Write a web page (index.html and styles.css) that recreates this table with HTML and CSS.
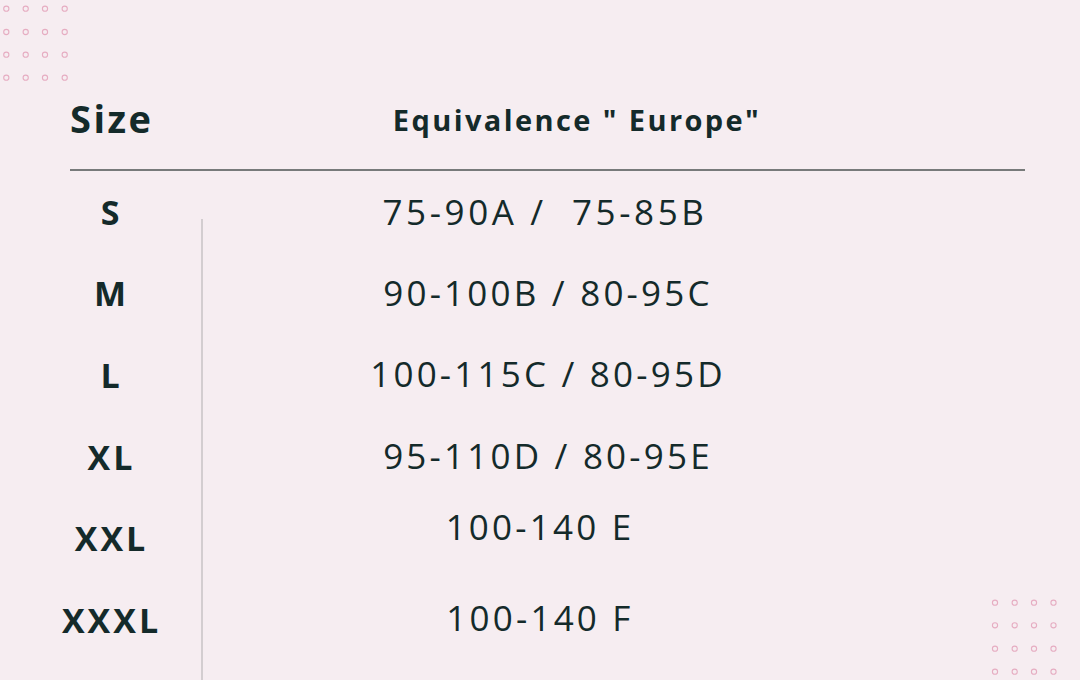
FILE: index.html
```html
<!DOCTYPE html>
<html lang="en">
<head>
<meta charset="utf-8">
<title>Size guide</title>
<link rel="stylesheet" href="styles.css">
</head>
<body>
<svg class="dots dots-tl" width="80" height="90" viewBox="0 0 80 90" aria-hidden="true">
  <g fill="none" stroke="#e6adc2" stroke-width="1.1">
    <circle cx="6.3" cy="8.7" r="2.6"/><circle cx="25.7" cy="8.7" r="2.6"/><circle cx="45" cy="8.7" r="2.6"/><circle cx="64.7" cy="8.7" r="2.6"/>
    <circle cx="6.3" cy="32" r="2.6"/><circle cx="25.7" cy="32" r="2.6"/><circle cx="45" cy="32" r="2.6"/><circle cx="64.7" cy="32" r="2.6"/>
    <circle cx="6.3" cy="54.7" r="2.6"/><circle cx="25.7" cy="54.7" r="2.6"/><circle cx="45" cy="54.7" r="2.6"/><circle cx="64.7" cy="54.7" r="2.6"/>
    <circle cx="6.3" cy="77.7" r="2.6"/><circle cx="25.7" cy="77.7" r="2.6"/><circle cx="45" cy="77.7" r="2.6"/><circle cx="64.7" cy="77.7" r="2.6"/>
  </g>
</svg>
<svg class="dots dots-br" width="80" height="90" viewBox="0 0 80 90" aria-hidden="true">
  <g fill="none" stroke="#e6adc2" stroke-width="1.1">
    <circle cx="15" cy="12.7" r="2.6"/><circle cx="34.7" cy="12.7" r="2.6"/><circle cx="54" cy="12.7" r="2.6"/><circle cx="73.5" cy="12.7" r="2.6"/>
    <circle cx="15" cy="35.3" r="2.6"/><circle cx="34.7" cy="35.3" r="2.6"/><circle cx="54" cy="35.3" r="2.6"/><circle cx="73.5" cy="35.3" r="2.6"/>
    <circle cx="15" cy="58.7" r="2.6"/><circle cx="34.7" cy="58.7" r="2.6"/><circle cx="54" cy="58.7" r="2.6"/><circle cx="73.5" cy="58.7" r="2.6"/>
    <circle cx="15" cy="81.7" r="2.6"/><circle cx="34.7" cy="81.7" r="2.6"/><circle cx="54" cy="81.7" r="2.6"/><circle cx="73.5" cy="81.7" r="2.6"/>
  </g>
</svg>

<main class="chart">
  <div class="head">
    <div class="head-size">Size</div>
    <div class="head-eq">Equivalence " Europe"</div>
  </div>
  <div class="body">
    <div class="sizes">
      <div class="size">S</div>
      <div class="size">M</div>
      <div class="size">L</div>
      <div class="size">XL</div>
      <div class="size">XXL</div>
      <div class="size">XXXL</div>
    </div>
    <div class="divider"></div>
    <div class="values">
      <div class="value value-first">75-90A /&nbsp; 75-85B</div>
      <div class="value">90-100B / 80-95C</div>
      <div class="value">100-115C / 80-95D</div>
      <div class="value">95-110D / 80-95E</div>
      <div class="value value-up">100-140 E</div>
      <div class="value value-down">100-140 F</div>
    </div>
  </div>
</main>
</body>
</html>
```

FILE: styles.css
```css
html, body {
  margin: 0;
  padding: 0;
}

body {
  width: 1080px;
  height: 680px;
  overflow: hidden;
  background: #f6edf1;
  color: #142a2a;
  font-family: "Open Sans", "Liberation Sans", sans-serif;
  position: relative;
}

.dots {
  position: absolute;
  display: block;
}

.dots-tl {
  left: 0;
  top: 0;
}

.dots-br {
  left: 980px;
  top: 590px;
}

.chart {
  padding-top: 90px;
}

.head {
  margin-left: 70px;
  width: 955px;
  height: 79px;
  border-bottom: 2px solid #777a7a;
  display: grid;
  grid-template-columns: 140px 734px;
  align-items: center;
}

.head-size {
  font-size: 38px;
  font-weight: 700;
  letter-spacing: 2.5px;
  margin-top: -24px;
}

.head-eq {
  font-size: 29px;
  font-weight: 700;
  letter-spacing: 2.4px;
  text-align: center;
  margin-top: -21px;
}

.body {
  display: flex;
}

.sizes {
  width: 182px;
  padding-left: 19px;
  display: flex;
  flex-direction: column;
}

.size {
  height: 81.6px;
  display: flex;
  align-items: center;
  justify-content: center;
  font-size: 34px;
  font-weight: 700;
  letter-spacing: 3px;
  padding-left: 3px;
}

.divider {
  width: 2px;
  margin-top: 48px;
  height: 470px;
  background: #d3cdd0;
}

.values {
  width: 684px;
  display: flex;
  flex-direction: column;
}

.value {
  height: 81.2px;
  display: flex;
  align-items: center;
  justify-content: center;
  font-size: 35px;
  font-weight: 400;
  letter-spacing: 3.2px;
  padding-left: 6px;
  white-space: pre;
}

.value-first {
  padding-left: 0;
  letter-spacing: 3.6px;
}

.value-up {
  margin-top: -10px;
  padding-left: 0;
  padding-right: 10px;
}

.value-down {
  margin-top: 10px;
  padding-left: 0;
  padding-right: 10px;
}
```
